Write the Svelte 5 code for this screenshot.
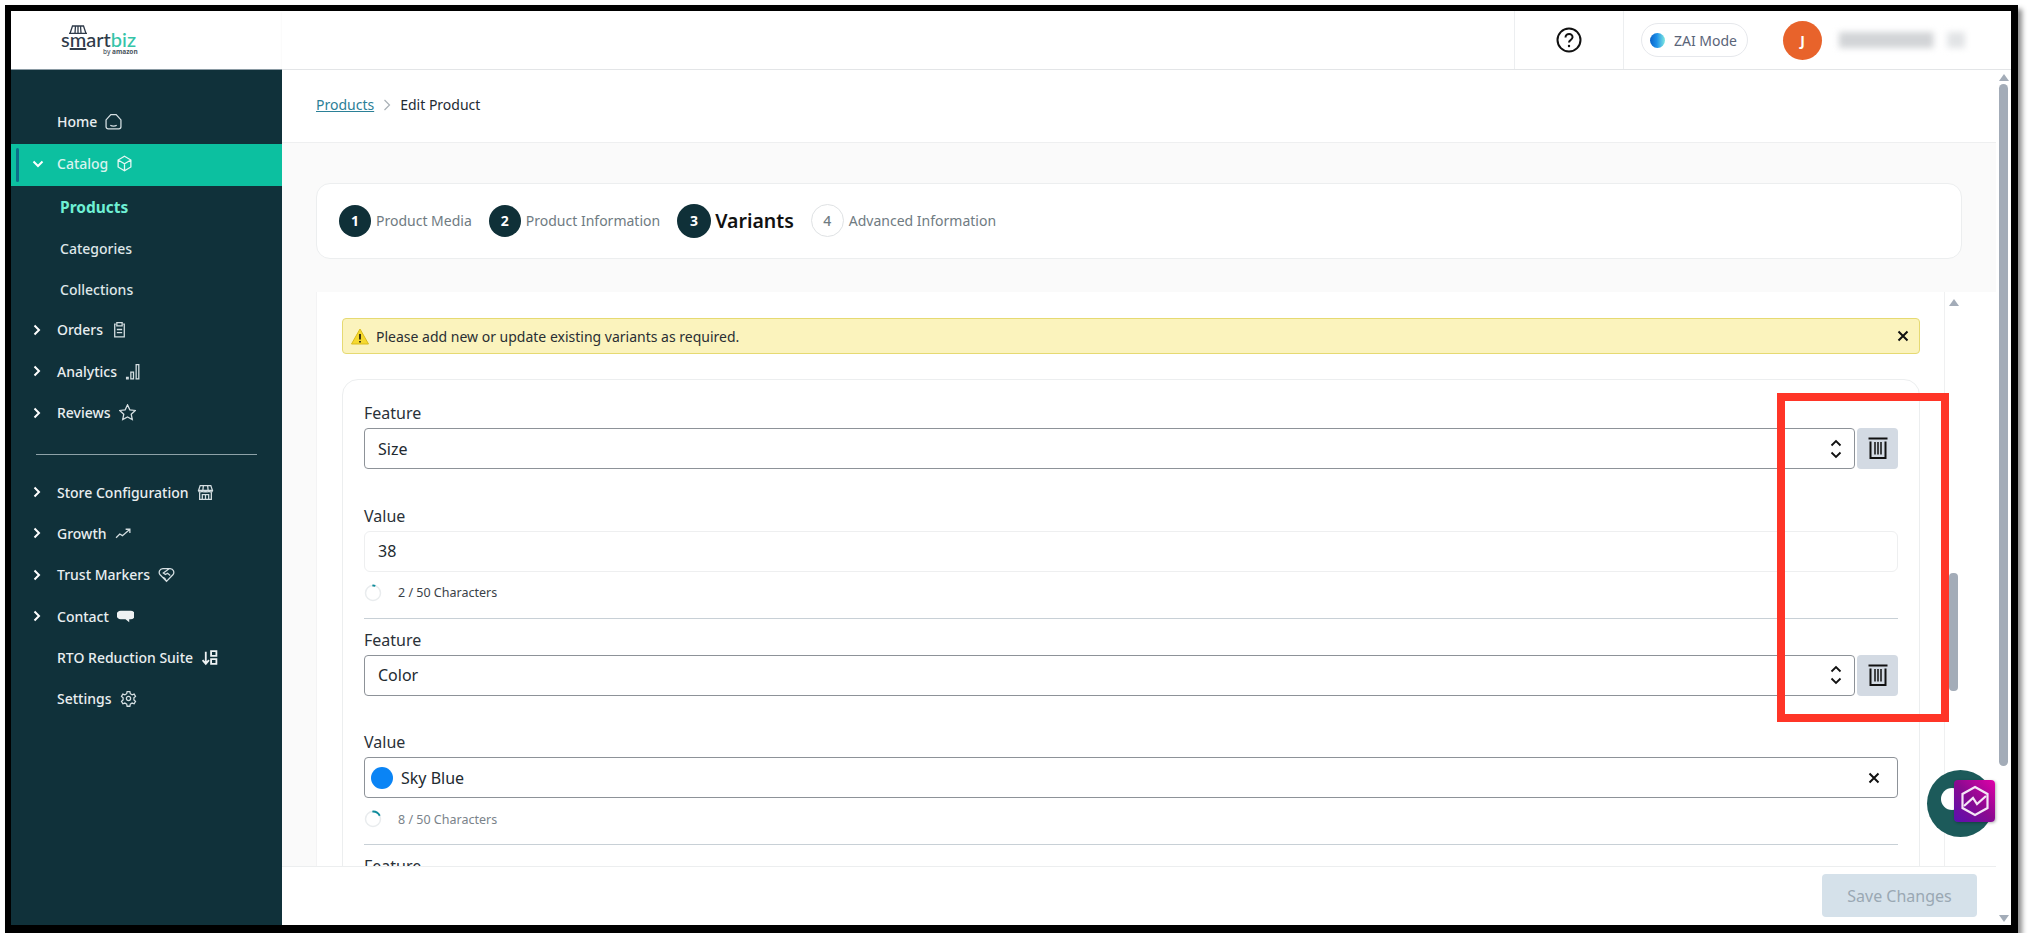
<script lang="ts">
  // Edit Product / Variants step, with the review annotation on top.
  const navTop = [
    { label: 'Home', icon: 'M1 13V6.500L5.500 1.500h5L15 6.500V13a2 2 0 0 1-2 2H3a2 2 0 0 1-2-2z M5 11.500c1.500 1 4.500 1 6 0' }
  ];
  const subItems = ['Categories', 'Collections'];
  const navA = [
    { label: 'Orders', arrow: true, icon: 'M4.500 3H3.500v12h9V3h-1 M5.500 1.500h5v3h-5z M5.500 8h5 M5.500 11h5' },
    { label: 'Analytics', arrow: true, icon: 'M1.500 13.500h1.500v1.500H1.500z M5.500 8.500h2.500V15H5.500z M10.500 1.500H13V15h-2.500z' },
    { label: 'Reviews', arrow: true, icon: 'M8 .8l2.200 4.700 5.100.6-3.800 3.500 1 5.100L8 12.200l-4.500 2.500 1-5.100L.7 6.100l5.100-.6z' }
  ];
  const navB = [
    { label: 'Store Configuration', arrow: true, icon: 'M3 1.500h10L14.500 6h-13z M1.500 6c0 2 3.200 2 3.300 0 .1 2 3.100 2 3.200 0 .1 2 3.100 2 3.200 0 .1 2 3.300 2 3.300 0 M2.500 8v6.500h11V8 M5 14.500V10h6v4.500 M8 10v4.500 M6 1.500 5.500 6 M10 1.500l.5 4.500' },
    { label: 'Growth', arrow: true, icon: 'M1 12l3.500-3.500 2.500 1.500 6.500-5.500 M10 4h4v3.500' },
    { label: 'Trust Markers', arrow: true, icon: 'M8 14.500 1.800 8C.3 6 1.500 2.500 4.500 2.500h7c3 0 4.200 3.500 2.700 5.500z M10.500 2.500 5 6.500l2 1.500 2-1.200 2.500 2.200 M5 10.500 7.500 13' },
    { label: 'Contact', arrow: true, solid: true, icon: 'M3.500 2.500h9.500a2.500 2.500 0 0 1 0 8h-1.500v3l-3.500-3H3.500a2.500 2.500 0 0 1 0-8z' },
    { label: 'RTO Reduction Suite', arrow: false, thick: true, icon: 'M4.500 2.500v11 M1.500 10.500l3 3.500 3-3.500 M9.500 2h5v4.500h-5z M9.500 9.500h5V14h-5z' },
    { label: 'Settings', arrow: false, icon: 'M6.700 1.500h2.600l.4 2 1.700 1 1.900-.7 1.300 2.300-1.500 1.300v2l1.500 1.300-1.300 2.300-1.900-.7-1.700 1-.4 2H6.700l-.4-2-1.700-1-1.900.7-1.300-2.300 1.500-1.300v-2L1.400 6.100l1.300-2.300 1.900.7 1.700-1z M10 8a2 2 0 1 1-4 0 2 2 0 0 1 4 0z' }
  ];
  const steps = [
    { n: 1, label: 'Product Media', state: 'done' },
    { n: 2, label: 'Product Information', state: 'done' },
    { n: 3, label: 'Variants', state: 'current' },
    { n: 4, label: 'Advanced Information', state: 'todo' }
  ];
</script>

{#snippet navRow(item)}
  <div class="nav-row">
    <span class="caret">
      {#if item.arrow}
        <svg width="10" height="12" viewBox="0 0 10 12"><path d="M2.500 1.500 7 6l-4.500 4.500" /></svg>
      {/if}
    </span>
    <span>{item.label}</span>
    <svg class="nav-icon" class:solid={item.solid} class:thick={item.thick} width="17" height="17" viewBox="0 0 16 16"><path d={item.icon} /></svg>
  </div>
{/snippet}

{#snippet stepper()}
  <svg class="updown" width="12" height="20" viewBox="0 0 12 20"><path d="M1.500 6.500 6 2l4.500 4.500 M1.500 13.500 6 18l4.500-4.500" /></svg>
{/snippet}

{#snippet trash()}
  <svg width="20" height="23" viewBox="0 0 20 23" class="trash">
    <path d="M0.500 1.500h19" stroke-width="2" />
    <path d="M2.500 4.500v16.500h15V4.500" stroke-width="2" />
    <path d="M7 5v12.500 M10 5v12.500 M13 5v12.500" stroke-width="1.500" />
  </svg>
{/snippet}

{#snippet ring(len)}
  <svg class="ring" width="18" height="18" viewBox="0 0 18 18">
    <circle cx="9" cy="9" r="7.500" class="ring-bg" />
    <circle cx="9" cy="9" r="7.500" class="ring-fg" stroke-dasharray="{len} 60" transform="rotate(-95 9 9)" />
  </svg>
{/snippet}

<div class="frame">
  <aside class="sidebar">
    <div class="logo">
      <div class="logo-mark">
        <svg class="roof" width="20" height="9" viewBox="0 0 20 9"><path d="M2 8.500 4.500 1h11L18 8.500 M7.500 1 7 8 M12.500 1 13 8 M10 1v7 M1 8.500h18" /></svg>
        <div class="wordmark"><span class="ink">s<u>m</u>art</span><span class="teal">biz</span></div>
        <div class="by">by <b>amazon</b></div>
      </div>
    </div>
    <nav>
      {#each navTop as item}
        {@render navRow(item)}
      {/each}
      <div class="nav-row open">
        <span class="marker"></span>
        <span class="caret">
          <svg width="12" height="10" viewBox="0 0 12 10"><path d="M1.500 2.500 6 7l4.500-4.500" /></svg>
        </span>
        <span>Catalog</span>
        <svg class="nav-icon" width="17" height="17" viewBox="0 0 16 16"><path d="M8 1.200 14 4.700v6.600l-6 3.500-6-3.500V4.700z M2 4.700l6 3.500 6-3.500 M8 8.200v6.600" /></svg>
      </div>
      <div class="nav-sub active">Products</div>
      {#each subItems as s}
        <div class="nav-sub">{s}</div>
      {/each}
      {#each navA as item}
        {@render navRow(item)}
      {/each}
      <hr />
      <div class="lower">
        {#each navB as item}
          {@render navRow(item)}
        {/each}
      </div>
    </nav>
  </aside>

  <div class="main">
    <header class="topbar">
      <div class="top-spacer"></div>
      <div class="top-help">
        <svg width="26" height="26" viewBox="0 0 26 26"><circle cx="13" cy="13" r="11.500" /><path d="M9.500 10.500c0-5 7.500-4.500 7 0-.3 2.500-3.500 2.500-3.500 5" /><circle class="dot" cx="13" cy="19" r="1.200" /></svg>
      </div>
      <div class="top-user">
        <div class="zai"><span class="zai-dot"></span>ZAI Mode</div>
        <div class="avatar">J</div>
        <div class="blurred"></div>
      </div>
    </header>

    <div class="body-row">
      <div class="page">
        <div class="crumbs">
          <a href="#products">Products</a>
          <svg width="8" height="12" viewBox="0 0 8 12"><path d="M1.500 1 6.500 6l-5 5" /></svg>
          <span>Edit Product</span>
        </div>

        <div class="content">
          <div class="steps">
            {#each steps as s}
              <div class="step {s.state}">
                <span class="num">{s.n}</span>
                <span class="step-label">{s.label}</span>
              </div>
            {/each}
          </div>

          <div class="panel">
            <div class="panel-body">
              <div class="alert">
                <svg width="18" height="17" viewBox="0 0 18 17"><path class="tri" d="M9 1 17.500 16H.5z" /><path class="bang" d="M9 6v5.500 M9 13v1.500" /></svg>
                <span class="alert-text">Please add new or update existing variants as required.</span>
                <svg class="alert-x" width="12" height="12" viewBox="0 0 12 12"><path d="M1.500 1.500l9 9 M10.500 1.500l-9 9" /></svg>
              </div>

              <div class="card">
                <label class="lbl" for="f1">Feature</label>
                <div class="feature-row">
                  <div id="f1" class="field strong grow"><span>Size</span>{@render stepper()}</div>
                  <button class="del" aria-label="Delete">{@render trash()}</button>
                </div>

                <div class="lbl value-lbl">Value</div>
                <div class="field soft">38</div>
                <div class="counter">{@render ring(3)}<span>2 / 50 Characters</span></div>
                <div class="sep"></div>

                <label class="lbl" for="f2">Feature</label>
                <div class="feature-row">
                  <div id="f2" class="field strong grow"><span>Color</span>{@render stepper()}</div>
                  <button class="del" aria-label="Delete">{@render trash()}</button>
                </div>

                <div class="lbl value-lbl">Value</div>
                <div class="field strong color">
                  <span class="swatch"></span>
                  <span class="grow">Sky Blue</span>
                  <svg class="clear" width="12" height="12" viewBox="0 0 12 12"><path d="M1.500 1.500l9 9 M10.500 1.500l-9 9" /></svg>
                </div>
                <div class="counter faded">{@render ring(9)}<span>8 / 50 Characters</span></div>
                <div class="sep"></div>

                <div class="lbl">Feature</div>
              </div>
            </div>
            <div class="inner-track">
              <span class="arrow-up"></span>
              <span class="inner-thumb"></span>
            </div>
          </div>
        </div>

        <footer class="footer">
          <button class="save" disabled>Save Changes</button>
        </footer>
      </div>

      <div class="outer-track">
        <span class="arrow-up"></span>
        <span class="outer-thumb"></span>
        <span class="arrow-down"></span>
      </div>
    </div>
  </div>

  <!-- review annotation and floating widgets sit on top of the page -->
  <div class="annotation"></div>
  <div class="chat">
    <span class="chat-blob"></span>
    <span class="badge">
      <svg width="30" height="32" viewBox="0 0 30 32"><path d="M15 2 27.500 9v14L15 30 2.500 23V9z" /><path d="M4 21 13 13l4 6 9-8" /></svg>
    </span>
  </div>
</div>

<style>
  :global(body) {
    margin: 0;
    background: #fff;
    font-family: "Noto Sans", "Liberation Sans", sans-serif;
  }

  .frame {
    position: relative;
    box-sizing: border-box;
    width: 2013px;
    height: 928px;
    margin: 5px 0 0 5px;
    border-style: solid;
    border-color: #000;
    border-width: 6px 7px 8px 6px;
    box-shadow: 4px 4px 5px rgba(0, 0, 0, 0.45);
    display: flex;
    overflow: hidden;
    background: #fff;
  }

  .sidebar {
    width: 271px;
    flex: none;
    display: flex;
    flex-direction: column;
    background: #10313a;
    color: #e9eef0;
    font-size: 14px;
    font-weight: 500;
  }
  .logo {
    height: 59px;
    flex: none;
    background: #fff;
    border-bottom: 1px solid #8a9aa3;
    box-sizing: border-box;
    padding: 14px 0 0 50px;
  }
  .logo-mark {
    position: relative;
    width: 80px;
    line-height: 1;
  }
  .roof {
    position: absolute;
    left: 7px;
    top: 0;
    fill: none;
    stroke: #2f3b4a;
    stroke-width: 1.300;
  }
  .wordmark {
    padding-top: 4px;
    font-family: Lato, sans-serif;
    font-size: 20px;
  }
  .ink { color: #2f3b4a; }
  .teal { color: #35c4a8; }
  .by {
    margin: 0 0 0 42px;
    font-size: 6.500px;
    color: #4a5560;
    white-space: nowrap;
  }

  nav {
    padding-top: 31px;
    display: flex;
    flex-direction: column;
  }
  .nav-row {
    position: relative;
    display: flex;
    align-items: center;
    height: 41.500px;
    padding-left: 21px;
    white-space: nowrap;
  }
  .nav-sub + .nav-row {
    margin-top: -1.300px;
  }
  .lower .nav-row {
    height: 41.300px;
  }
  .caret {
    width: 25px;
    flex: none;
    display: flex;
    align-items: center;
  }
  .caret svg {
    fill: none;
    stroke: #fff;
    stroke-width: 2;
  }
  .nav-icon {
    margin-left: 8px;
    fill: none;
    stroke: #d5dfe2;
    stroke-width: 1.200;
  }
  .nav-icon.solid {
    fill: #eef2f3;
    stroke: none;
  }
  .nav-icon.thick {
    stroke: #eef2f3;
    stroke-width: 1.700;
  }
  .open {
    box-sizing: border-box;
    height: 42px;
    margin-top: 1.500px;
    padding-bottom: 3px;
    background: #0cc0a0;
    color: #d8f3ee;
  }
  .marker {
    position: absolute;
    left: 5px;
    top: 4px;
    bottom: 4px;
    width: 3px;
    border-radius: 2px;
    background: #0b6f8a;
  }
  .open .nav-icon { stroke: #e6f7f4; }
  .nav-sub {
    height: 41.500px;
    display: flex;
    align-items: center;
    padding-left: 49px;
    color: #dfe7e9;
  }
  .nav-sub.active {
    color: #6ff0d4;
    font-weight: 700;
    font-size: 15.500px;
  }
  hr {
    width: 221px;
    height: 1px;
    margin: 19.800px 0 17px 25px;
    border: 0;
    background: #8ea2a8;
  }

  .main {
    flex: 1;
    min-width: 0;
    display: flex;
    flex-direction: column;
  }
  .topbar {
    height: 59px;
    flex: none;
    box-sizing: border-box;
    display: flex;
    border-bottom: 1px solid #e3e5e7;
    box-shadow: 0 1px 2px rgba(0, 0, 0, 0.06);
  }
  .top-spacer { flex: 1; }
  .top-help {
    width: 110px;
    box-sizing: border-box;
    display: flex;
    align-items: center;
    justify-content: center;
    border-left: 1px solid #eceef0;
    border-right: 1px solid #eceef0;
  }
  .top-help svg {
    fill: none;
    stroke: #111;
    stroke-width: 2;
  }
  .top-help .dot {
    fill: #111;
    stroke: none;
  }
  .top-user {
    width: 387px;
    box-sizing: border-box;
    display: flex;
    align-items: center;
    padding-left: 17px;
  }
  .zai {
    box-sizing: border-box;
    width: 107px;
    height: 34px;
    display: flex;
    align-items: center;
    gap: 9px;
    padding-left: 8px;
    border: 1px solid #e6e8ec;
    border-radius: 17px;
    color: #5a6478;
    font-size: 14px;
  }
  .zai-dot {
    width: 15px;
    height: 15px;
    border-radius: 50%;
    background: linear-gradient(90deg, #0a63c9, #1e90e8 45%, #7fe8e0);
  }
  .avatar {
    width: 39px;
    height: 39px;
    margin-left: 35px;
    border-radius: 50%;
    background: #e8632b;
    color: #fff;
    font-size: 14px;
    font-weight: 700;
    display: flex;
    align-items: center;
    justify-content: center;
  }
  .blurred {
    width: 126px;
    height: 16px;
    margin-left: 17px;
    background: linear-gradient(90deg, #d2d4d7 0 74%, transparent 76% 85%, #e2e4e6 87% 100%);
    filter: blur(3px);
  }

  .body-row {
    flex: 1;
    min-height: 0;
    display: flex;
  }
  .page {
    flex: 1;
    min-width: 0;
    display: flex;
    flex-direction: column;
    background: #fafafa;
  }
  .crumbs {
    height: 73px;
    flex: none;
    box-sizing: border-box;
    padding: 0 0 3px 34px;
    display: flex;
    align-items: center;
    gap: 9px;
    background: #fff;
    border-bottom: 1px solid #eeeff0;
    font-size: 14px;
    color: #232b33;
  }
  .crumbs a {
    color: #2b8097;
    text-decoration: underline;
  }
  .crumbs svg {
    fill: none;
    stroke: #a9b0b6;
    stroke-width: 1.200;
  }

  .content {
    flex: 1;
    min-height: 0;
    padding: 40px 0 0 34px;
    display: flex;
    flex-direction: column;
    overflow: hidden;
  }
  .steps {
    flex: none;
    box-sizing: border-box;
    width: 1646px;
    height: 76px;
    padding: 0 0 1px 22px;
    display: flex;
    align-items: center;
    gap: 17px;
    background: #fff;
    border: 1px solid #eceeef;
    border-radius: 14px;
  }
  .step {
    display: flex;
    align-items: center;
    gap: 5px;
    font-size: 14px;
    color: #6f7b82;
    white-space: nowrap;
  }
  .step.current { gap: 4px; }
  .num {
    width: 32px;
    height: 32px;
    box-sizing: border-box;
    border-radius: 50%;
    background: #0f3038;
    color: #fff;
    display: flex;
    align-items: center;
    justify-content: center;
    font-size: 14px;
    font-weight: 700;
  }
  .step.current .num {
    width: 34px;
    height: 34px;
  }
  .step.current .step-label {
    font-size: 19.500px;
    font-weight: 600;
    color: #111;
  }
  .step.todo .num {
    width: 33px;
    height: 33px;
    background: #fff;
    color: #6f7b82;
    border: 1px solid #dfe2e4;
    font-weight: 500;
  }

  .panel {
    flex: 1;
    min-height: 0;
    margin-top: 33px;
    display: flex;
    background: #fff;
  }
  .panel-body {
    flex: 1;
    min-width: 0;
    box-sizing: border-box;
    padding: 26px 24px 0 25px;
    border-left: 1px solid #f3f3f4;
    border-right: 1px solid #eff0f1;
    overflow: hidden;
  }
  .alert {
    height: 36px;
    box-sizing: border-box;
    display: flex;
    align-items: center;
    padding: 0 10px 0 8px;
    gap: 7px;
    background: #fbf3bd;
    border: 1px solid #e6da72;
    border-radius: 4px;
    font-size: 14px;
    color: #2a2f33;
  }
  .alert-text { flex: 1; }
  .tri {
    fill: #f6d92f;
    stroke: #d9bb1c;
    stroke-linejoin: round;
  }
  .bang {
    fill: none;
    stroke: #111;
    stroke-width: 1.600;
  }
  .alert-x, .clear {
    fill: none;
    stroke: #111;
    stroke-width: 2;
  }

  .card {
    margin-top: 25px;
    padding: 0 21px;
    height: 600px;
    border: 1px solid #eceeef;
    border-radius: 16px;
  }
  .lbl {
    display: block;
    padding-top: 22px;
    height: 26px;
    line-height: 22px;
    font-size: 16px;
    color: #2a3138;
  }
  .card > .sep + .lbl {
    padding-top: 10px;
  }
  .value-lbl {
    padding-top: 35.500px;
  }
  .feature-row {
    display: flex;
    gap: 2px;
  }
  .grow { flex: 1; }
  .field {
    box-sizing: border-box;
    height: 41px;
    display: flex;
    align-items: center;
    justify-content: space-between;
    padding: 0 12px 0 13px;
    border-radius: 4px;
    font-size: 16px;
    color: #222a30;
  }
  .strong { border: 1px solid #8d9298; }
  .soft {
    border: 1px solid #eeeff0;
    border-radius: 6px;
  }
  .updown {
    fill: none;
    stroke: #111;
    stroke-width: 1.800;
  }
  .del {
    width: 41px;
    height: 41px;
    padding: 0;
    border: 0;
    border-radius: 4px;
    background: #d3dae3;
    display: flex;
    align-items: center;
    justify-content: center;
  }
  .trash {
    fill: none;
    stroke: #111;
  }
  .color {
    gap: 8px;
    padding-left: 6px;
    padding-right: 17px;
  }
  .swatch {
    width: 22px;
    height: 22px;
    border-radius: 50%;
    background: #0a84f5;
  }
  .counter {
    display: flex;
    align-items: center;
    gap: 16px;
    height: 26px;
    margin-top: 8px;
    font-size: 12.500px;
    color: #3a4248;
  }
  .counter.faded { color: #7a838a; }
  .ring { fill: none; }
  .ring-bg {
    stroke: #e9ecee;
    stroke-width: 1.500;
  }
  .ring-fg {
    stroke: #0f8c9c;
    stroke-width: 1.800;
  }
  .sep {
    height: 1px;
    margin-top: 12px;
    background: #c8d0d6;
  }

  .inner-track {
    width: 51px;
    flex: none;
    box-sizing: border-box;
    padding-left: 4px;
    display: flex;
    flex-direction: column;
    align-items: flex-start;
  }
  .arrow-up {
    width: 0;
    height: 0;
    border: 5px solid transparent;
    border-top: 0;
    border-bottom: 7px solid #a3acb8;
  }
  .arrow-down {
    width: 0;
    height: 0;
    border: 5px solid transparent;
    border-bottom: 0;
    border-top: 7px solid #a3acb8;
  }
  .inner-track .arrow-up { margin-top: 7px; }
  .inner-thumb {
    width: 9px;
    height: 118px;
    margin-top: 267px;
    border-radius: 4px;
    background: #a3acb8;
  }

  .footer {
    height: 59px;
    flex: none;
    box-sizing: border-box;
    padding: 7px 19px 0 0;
    display: flex;
    justify-content: flex-end;
    align-items: flex-start;
    background: #fff;
    border-top: 1px solid #eceeef;
    position: relative;
  }
  .save {
    width: 155px;
    height: 43px;
    border: 0;
    border-radius: 4px;
    background: #d5e1ea;
    color: #9aa8b3;
    font-family: inherit;
    font-size: 16px;
  }

  .outer-track {
    width: 15px;
    flex: none;
    box-sizing: border-box;
    padding: 4px 3px 3px 3px;
    display: flex;
    flex-direction: column;
    align-items: center;
    background: #fff;
  }
  .outer-thumb {
    width: 9px;
    height: 682px;
    margin-top: 3px;
    border-radius: 5px;
    background: #a3acb8;
  }
  .outer-track .arrow-down { margin-top: auto; }

  .annotation {
    position: absolute;
    left: 1766px;
    top: 382px;
    width: 172px;
    height: 329px;
    box-sizing: border-box;
    border: 8px solid #ff3527;
  }
  .chat {
    position: absolute;
    left: 1916px;
    top: 759px;
    width: 67px;
    height: 67px;
    border-radius: 50%;
    background: #1c5a5a;
  }
  .chat-blob {
    position: absolute;
    left: 14px;
    top: 18px;
    width: 22px;
    height: 22px;
    border-radius: 50%;
    background: #fff;
  }
  .badge {
    position: absolute;
    left: 27px;
    top: 10px;
    width: 41px;
    height: 42px;
    border-radius: 4px;
    background: linear-gradient(45deg, #5a10b0, #8a0a90 50%, #e000a8);
    display: flex;
    align-items: center;
    justify-content: center;
    box-shadow: 1px 1px 3px rgba(0, 0, 0, 0.3);
  }
  .badge svg {
    fill: none;
    stroke: #f4e6f6;
    stroke-width: 2.200;
  }
</style>
